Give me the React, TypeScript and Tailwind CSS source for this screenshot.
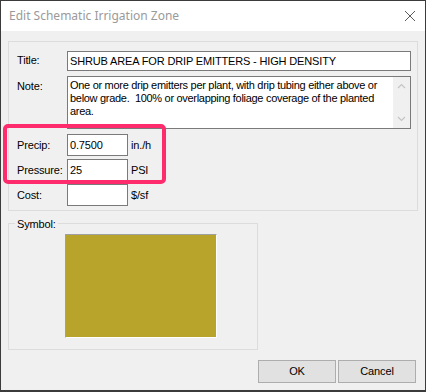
import React from "react";

function Field({ label, value, unit }: { label: string; value: string; unit?: string }) {
  return (
    <div className="flex items-center h-[22px]">
      <span className="pl-[8px] w-[58px] shrink-0">{label}</span>
      <div className="h-full w-[61px] border border-[#7a7a7a] bg-white px-[2px] flex items-center text-black">{value}</div>
      {unit && <span className="ml-[3px] pt-[1px]">{unit}</span>}
    </div>
  );
}

export default function App() {
  return (
    <div
      className="relative w-[426px] h-[392px] bg-[#f0f0f0] border-x border-t border-b-2 border-[#3b3b3b] flex flex-col text-[11px] tracking-[-0.15px] text-black"
      style={{ fontFamily: '"Liberation Sans", Arial, sans-serif' }}
    >
      {/* title bar */}
      <div className="h-[30px] bg-white flex items-center justify-between pl-[8px] pr-[9px] shrink-0">
        <span className="text-[12px] tracking-normal text-[#9a9a9a]" style={{ fontFamily: '"Noto Sans", sans-serif' }}>
          Edit Schematic Irrigation Zone
        </span>
        <svg width="12" height="12" viewBox="0 0 12 12">
          <path d="M1 1 L11 11 M11 1 L1 11" stroke="#5a5a5a" strokeWidth="1" fill="none" />
        </svg>
      </div>

      <div className="px-[7px] flex flex-col">
        {/* upper group */}
        <div className="mt-[10px] h-[170px] w-[410px] border border-[#dcdcdc] flex flex-col pt-[9px]">
          <div className="flex items-center h-[20px]">
            <span className="pl-[8px] w-[58px] shrink-0 pb-[1px]">Title:</span>
            <div className="h-full w-[344px] border border-[#7a7a7a] bg-white px-[2px] flex items-center">
              SHRUB AREA FOR DRIP EMITTERS - HIGH DENSITY
            </div>
          </div>
          <div className="flex mt-[5px] h-[53px]">
            <span className="pl-[8px] w-[58px] shrink-0 pt-[2px]">Note:</span>
            <div className="h-full w-[344px] border border-[#7a7a7a] bg-white flex">
              <div className="flex-1 px-[2px] pt-[2px] leading-[13px] whitespace-pre overflow-hidden tracking-[-0.3px]">
                {"One or more drip emitters per plant, with drip tubing either above or\nbelow grade.  100% or overlapping foliage coverage of the planted\narea."}
              </div>
              <div className="w-[17px] bg-[#f0f0f0] flex flex-col items-center justify-between py-[6px]">
                <svg width="9" height="6" viewBox="0 0 9 6">
                  <path d="M1 5 L4.5 1.5 L8 5" stroke="#c4c4c4" strokeWidth="1.2" fill="none" />
                </svg>
                <svg width="9" height="6" viewBox="0 0 9 6">
                  <path d="M1 1 L4.5 4.5 L8 1" stroke="#c4c4c4" strokeWidth="1.2" fill="none" />
                </svg>
              </div>
            </div>
          </div>
          <div className="mt-[5px] flex flex-col gap-[3px]">
            <Field label="Precip:" value="0.7500" unit="in./h" />
            <Field label="Pressure:" value="25" unit="PSI" />
            <Field label="Cost:" value="" unit="$/sf" />
          </div>
        </div>

        {/* symbol group */}
        <div className="relative mt-[12px] h-[127px] w-[250px] border border-[#dcdcdc] pt-[10px] pl-[56px]">
          <span className="absolute left-[6px] top-[-8px] bg-[#f0f0f0] px-[2px]">Symbol:</span>
          <div className="w-[152px] h-[104px] bg-[#b8a42a] border-t border-l border-[#a0a0a0] border-b-white border-r-white border-b border-r" />
        </div>

        {/* buttons */}
        <div className="mt-[10px] flex justify-end gap-[2px] pr-[2px]">
          <button className="w-[78px] h-[23px] bg-[#e1e1e1] border border-[#adadad] text-[11px]">OK</button>
          <button className="w-[78px] h-[23px] bg-[#e1e1e1] border border-[#adadad] text-[11px]">Cancel</button>
        </div>
      </div>

      {/* highlight annotation */}
      <div className="absolute left-[2px] top-[123px] w-[163px] h-[60px] border-[4px] border-[#fe2c6c] rounded-[5px] pointer-events-none" />
    </div>
  );
}
